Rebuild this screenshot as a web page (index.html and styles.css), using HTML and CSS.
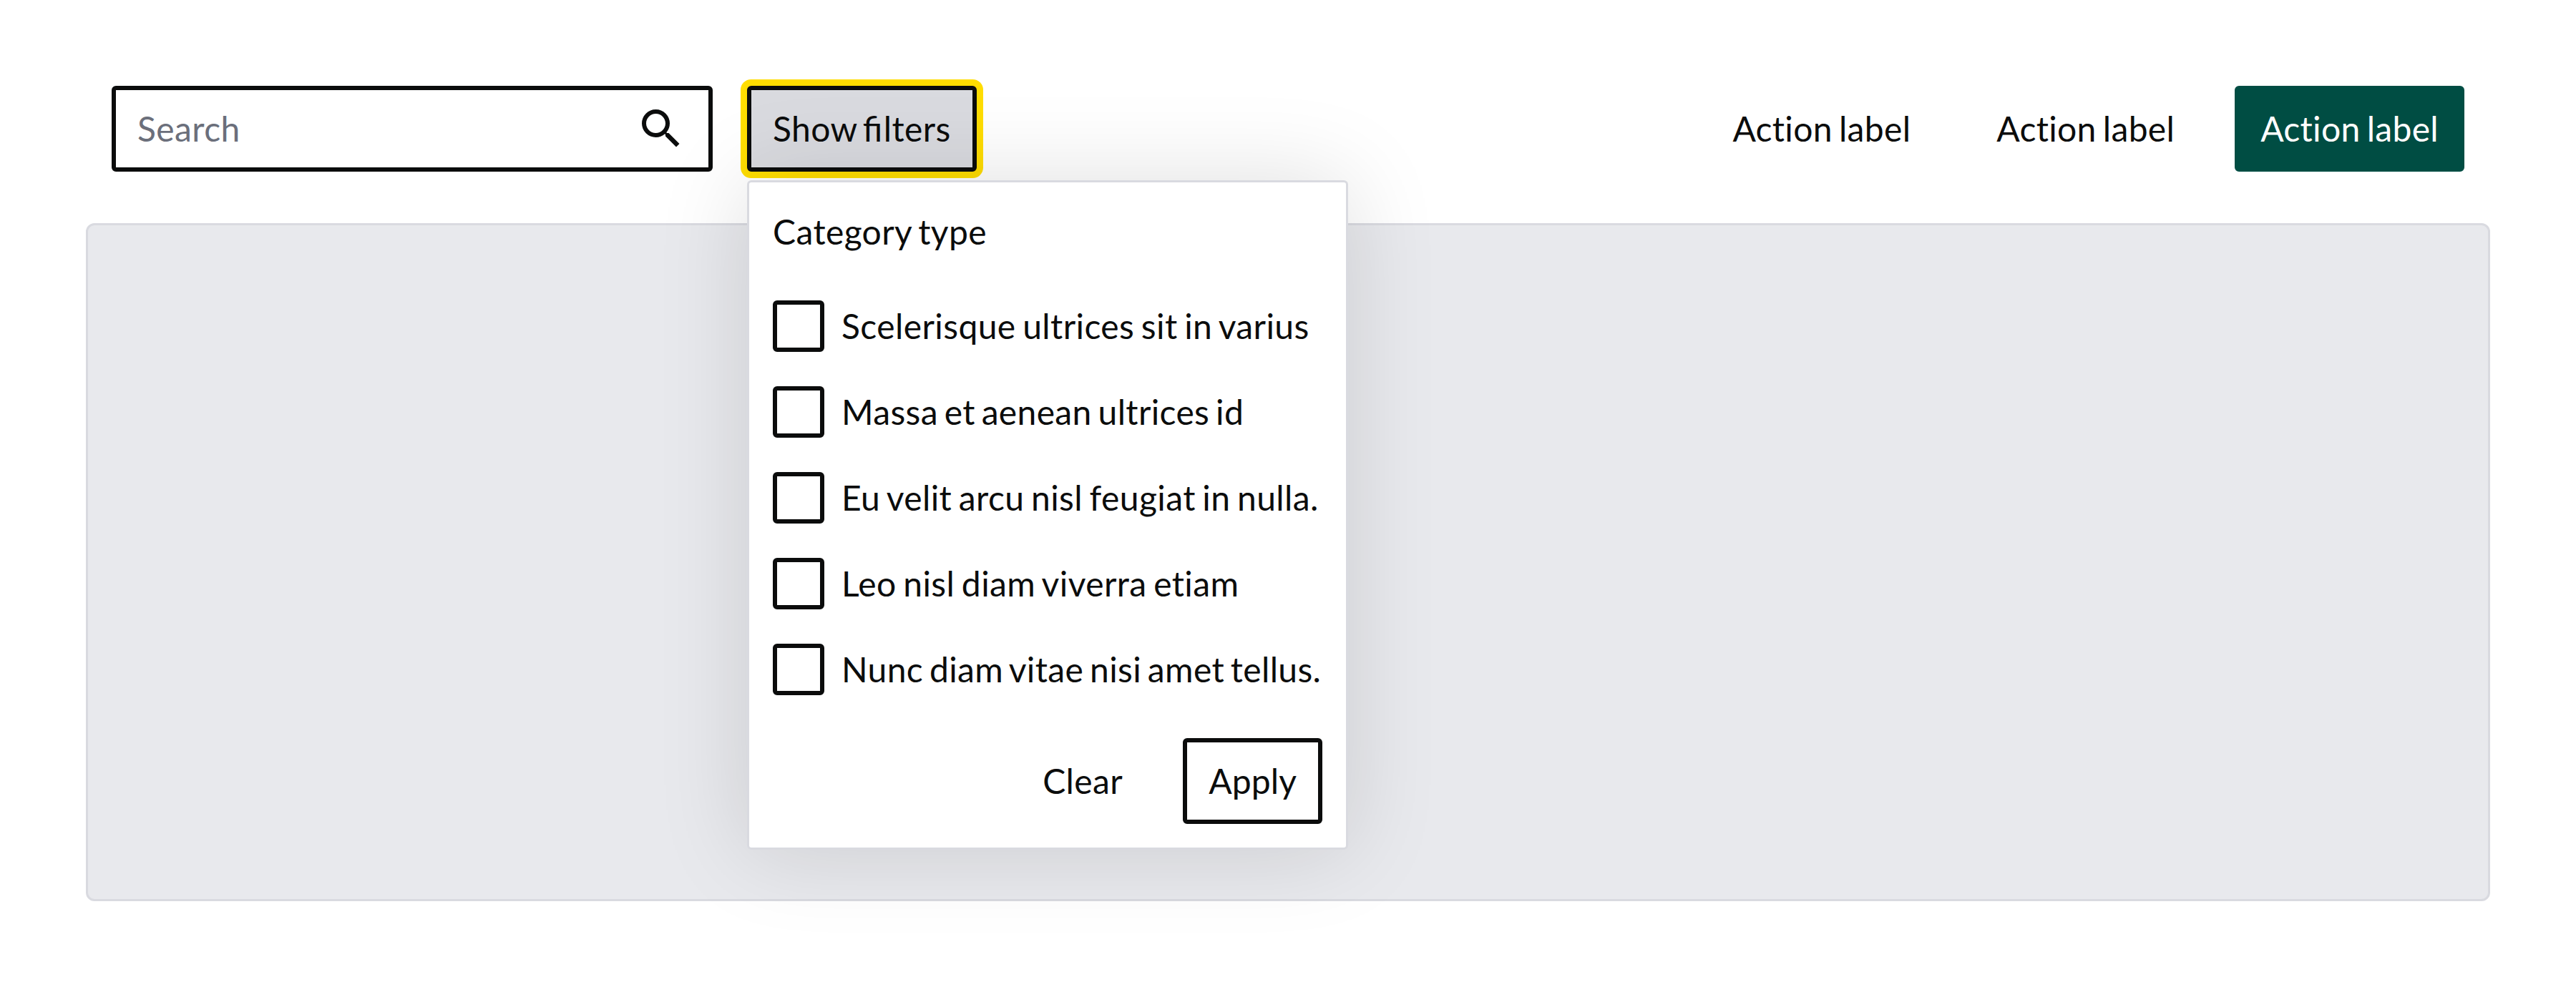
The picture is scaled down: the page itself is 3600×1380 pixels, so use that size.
FILE: index.html
```html
<!DOCTYPE html>
<html lang="en">
<head>
<meta charset="utf-8">
<title>Filter toolbar</title>
<link rel="stylesheet" href="styles.css">
</head>
<body>
<main class="page">
  <header class="toolbar">
    <label class="search">
      <input class="search-input" type="text" placeholder="Search" aria-label="Search">
      <svg class="search-icon" viewBox="0 0 24 24" aria-hidden="true"><path d="M15.5 14h-.79l-.28-.27A6.471 6.471 0 0 0 16 9.5 6.5 6.5 0 1 0 9.5 16c1.61 0 3.09-.59 4.23-1.57l.27.28v.79l5 4.99L20.49 19l-4.99-5zm-6 0C7.01 14 5 11.99 5 9.5S7.01 5 9.5 5 14 7.01 14 9.5 11.99 14 9.5 14z"/></svg>
    </label>
    <div class="filters">
      <button class="button button-outline button-active" type="button">Show <span class="ligature">fi</span>lters</button>
      <section class="menu">
        <h2 class="menu-title">Category type</h2>
        <div class="options">
          <label class="option"><input class="checkbox" type="checkbox">Scelerisque ultrices sit in varius</label>
          <label class="option option-tight"><input class="checkbox" type="checkbox">Massa et aenean ultrices id</label>
          <label class="option"><input class="checkbox" type="checkbox">Eu velit arcu nisl feugiat in nulla.</label>
          <label class="option"><input class="checkbox" type="checkbox">Leo nisl diam viverra etiam</label>
          <label class="option option-tight"><input class="checkbox" type="checkbox">Nunc diam vitae nisi amet tellus.</label>
        </div>
        <div class="menu-actions">
          <button class="button" type="button">Clear</button>
          <button class="button button-outline button-apply" type="button">Apply</button>
        </div>
      </section>
    </div>
    <nav class="actions">
      <button class="button" type="button">Action label</button>
      <button class="button" type="button">Action label</button>
      <button class="button button-primary" type="button">Action label</button>
    </nav>
  </header>
  <div class="content"></div>
</main>
</body>
</html>
```
FILE: styles.css
```css
* { box-sizing: border-box; }

body {
  margin: 0;
  background: #fff;
  color: #0b0c0c;
  font: 400 48px/72px Lato, sans-serif;
  font-variant-ligatures: none;
  letter-spacing: 0.4px;
  word-spacing: -3.5px;
}

.page {
  display: flex;
  flex-direction: column;
  gap: 72px;
  height: 1380px;
  padding: 120px;
}

.toolbar {
  display: flex;
  gap: 48px;
  height: 120px;
  padding: 0 36px;
}

.search {
  display: flex;
  align-items: center;
  width: 840px;
  padding: 0 30px;
  border: 6px solid #0b0c0c;
  border-radius: 6px;
  background: #fff;
}

.search-input {
  flex: 1;
  min-width: 0;
  padding: 0;
  border: 0;
  outline: 0;
  background: none;
  font: inherit;
  letter-spacing: inherit;
}

.search-input::placeholder { color: #6b6f7b; opacity: 1; }

.search-icon {
  width: 72px;
  height: 72px;
  fill: #0b0c0c;
}

.filters { position: relative; }

.button {
  height: 120px;
  padding: 0 30px;
  border: 6px solid transparent;
  border-radius: 6px;
  background: none;
  color: inherit;
  font: inherit;
  font-variant-ligatures: none;
  letter-spacing: inherit;
  word-spacing: inherit;
  white-space: nowrap;
}

.button-outline { border-color: #0b0c0c; }

.button-apply { letter-spacing: 0.1px; }

.button-active {
  background: #d9dadf;
  box-shadow: 0 0 0 9px #fd0;
  word-spacing: -4.5px;
}

.ligature {
  margin-right: 1.5px;
  font-variant-ligatures: common-ligatures;
  letter-spacing: 0;
}

.button-primary {
  border-color: #004d43;
  background: #004d43;
  color: #fff;
}

.menu {
  position: absolute;
  top: 132px;
  left: 0;
  width: 840px;
  padding: 33px;
  border: 3px solid #d9dae0;
  border-radius: 6px;
  background: #fff;
  box-shadow: 0 0 128px rgba(11, 12, 12, 0.13);
}

.menu-title {
  margin: 0 0 60px;
  font-size: 48px;
  font-weight: 400;
}

.options {
  display: flex;
  flex-direction: column;
  gap: 48px;
}

.option {
  display: flex;
  gap: 24px;
  white-space: nowrap;
  word-spacing: -3.1px;
}

.option-tight {
  letter-spacing: 0.35px;
  word-spacing: -3.8px;
}

.checkbox {
  appearance: none;
  flex: none;
  width: 72px;
  height: 72px;
  margin: 0;
  border: 6px solid #0b0c0c;
  border-radius: 6px;
}

.menu-actions {
  display: flex;
  justify-content: flex-end;
  gap: 48px;
  margin-top: 60px;
}

.actions {
  display: flex;
  gap: 48px;
  margin-left: auto;
  letter-spacing: 0.32px;
}

.content {
  flex: 1;
  border: 3px solid #d9dae0;
  border-radius: 12px;
  background: #e8e9ed;
}
```
